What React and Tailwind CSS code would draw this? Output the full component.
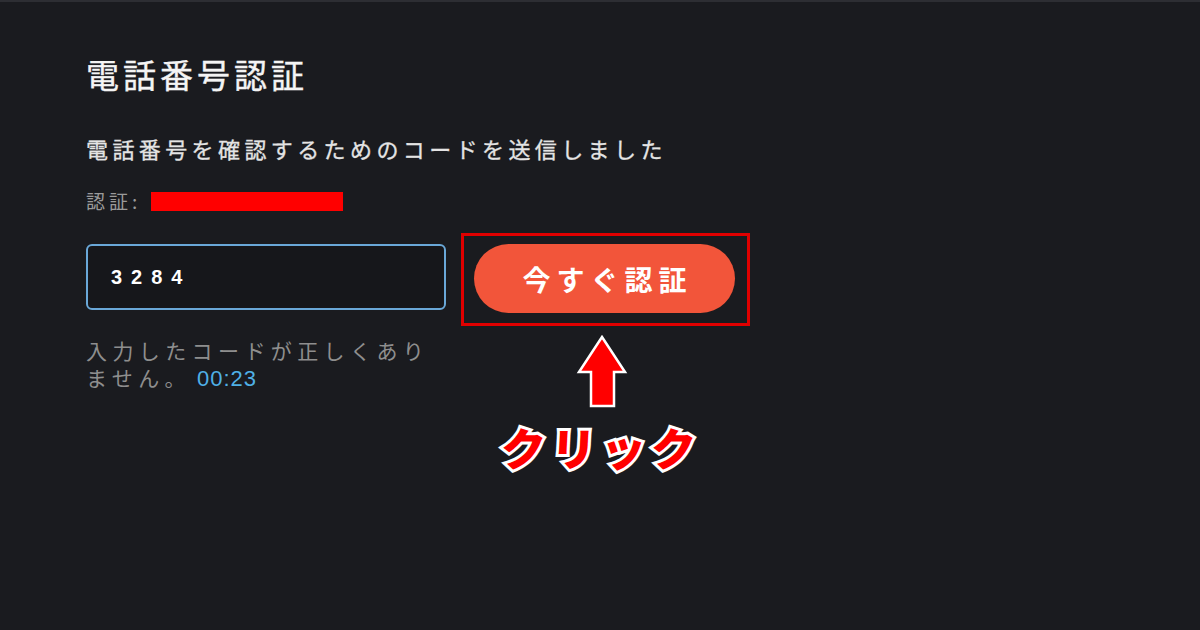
function ArrowUp() {
  return (
    <svg width="54" height="74" viewBox="0 0 54 74" className="block">
      <polygon
        points="27,2 50,37 39,37 39,71 16,71 16,37 4,37"
        fill="#ff0000"
        stroke="#ffffff"
        strokeWidth="2.5"
        strokeLinejoin="miter"
      />
    </svg>
  );
}

function App() {
  return (
    <div className="w-[1200px] h-[630px] overflow-hidden bg-[#1a1b1f] border-t-2 border-[#2d2e33] pl-[86px] pt-[51px] font-['Noto_Sans_CJK_JP','Noto_Sans',sans-serif]">
      <h1 className="text-[33px] leading-[42px] tracking-[4px] text-[#f4f4f4] font-normal [-webkit-text-stroke:0.4px_#f4f4f4]">
        電話番号認証
      </h1>
      <p className="mt-[38px] text-[22px] leading-[30px] tracking-[4.4px] text-[#e4e4e4] [-webkit-text-stroke:0.3px_#e4e4e4]">
        電話番号を確認するためのコードを送信しました
      </p>
      <div className="mt-[26px] flex items-center text-[19px] leading-[24px] text-[#9a9a9a]">
        <span className="tracking-[4px]">認証:</span>
        <span className="ml-[10px] inline-block w-[192px] h-[19px] bg-[#ff0000]" />
      </div>

      <div className="mt-[20px] flex items-start gap-[15px]">
        <div className="flex flex-col w-[360px]">
          <div className="mt-[11px] h-[66px] w-[360px] rounded-[6px] border-2 border-[#6aa8d8] bg-[#16171b] flex items-center pl-[23px]">
            <span className="font-['Liberation_Sans',sans-serif] font-bold text-[20px] tracking-[9px] text-white">
              3284
            </span>
          </div>
          <p className="mt-[27px] text-[21px] leading-[27px] tracking-[5.4px] text-[#8e8e8e] whitespace-nowrap">
            入力したコードが正しくあり
            <br />
            ません。
            <span className="ml-[6px] text-[22px] tracking-[1px] font-['Liberation_Sans',sans-serif] text-[#4fb0e6]">
              00:23
            </span>
          </p>
        </div>

        <div className="flex flex-col items-center">
          <div className="border-[3px] border-[#e00000] pl-[10px] pr-[12px] pt-[8px] pb-[10px]">
            <button className="w-[261px] h-[69px] rounded-full bg-[#f2553a] text-white font-bold text-[28px] tracking-[6px] pl-[6px] flex items-center justify-center">
              今すぐ認証
            </button>
          </div>
          <div className="mt-[9px] -ml-[8px]">
            <ArrowUp />
          </div>
          <div className="mt-[12px] -ml-[8px] text-[45px] leading-[52px] font-black tracking-[5px] text-[#ff0000] -skew-x-3 [-webkit-text-stroke:6px_#ffffff] [paint-order:stroke_fill]">
            クリック
          </div>
        </div>
      </div>
    </div>
  );
}

export default App;
